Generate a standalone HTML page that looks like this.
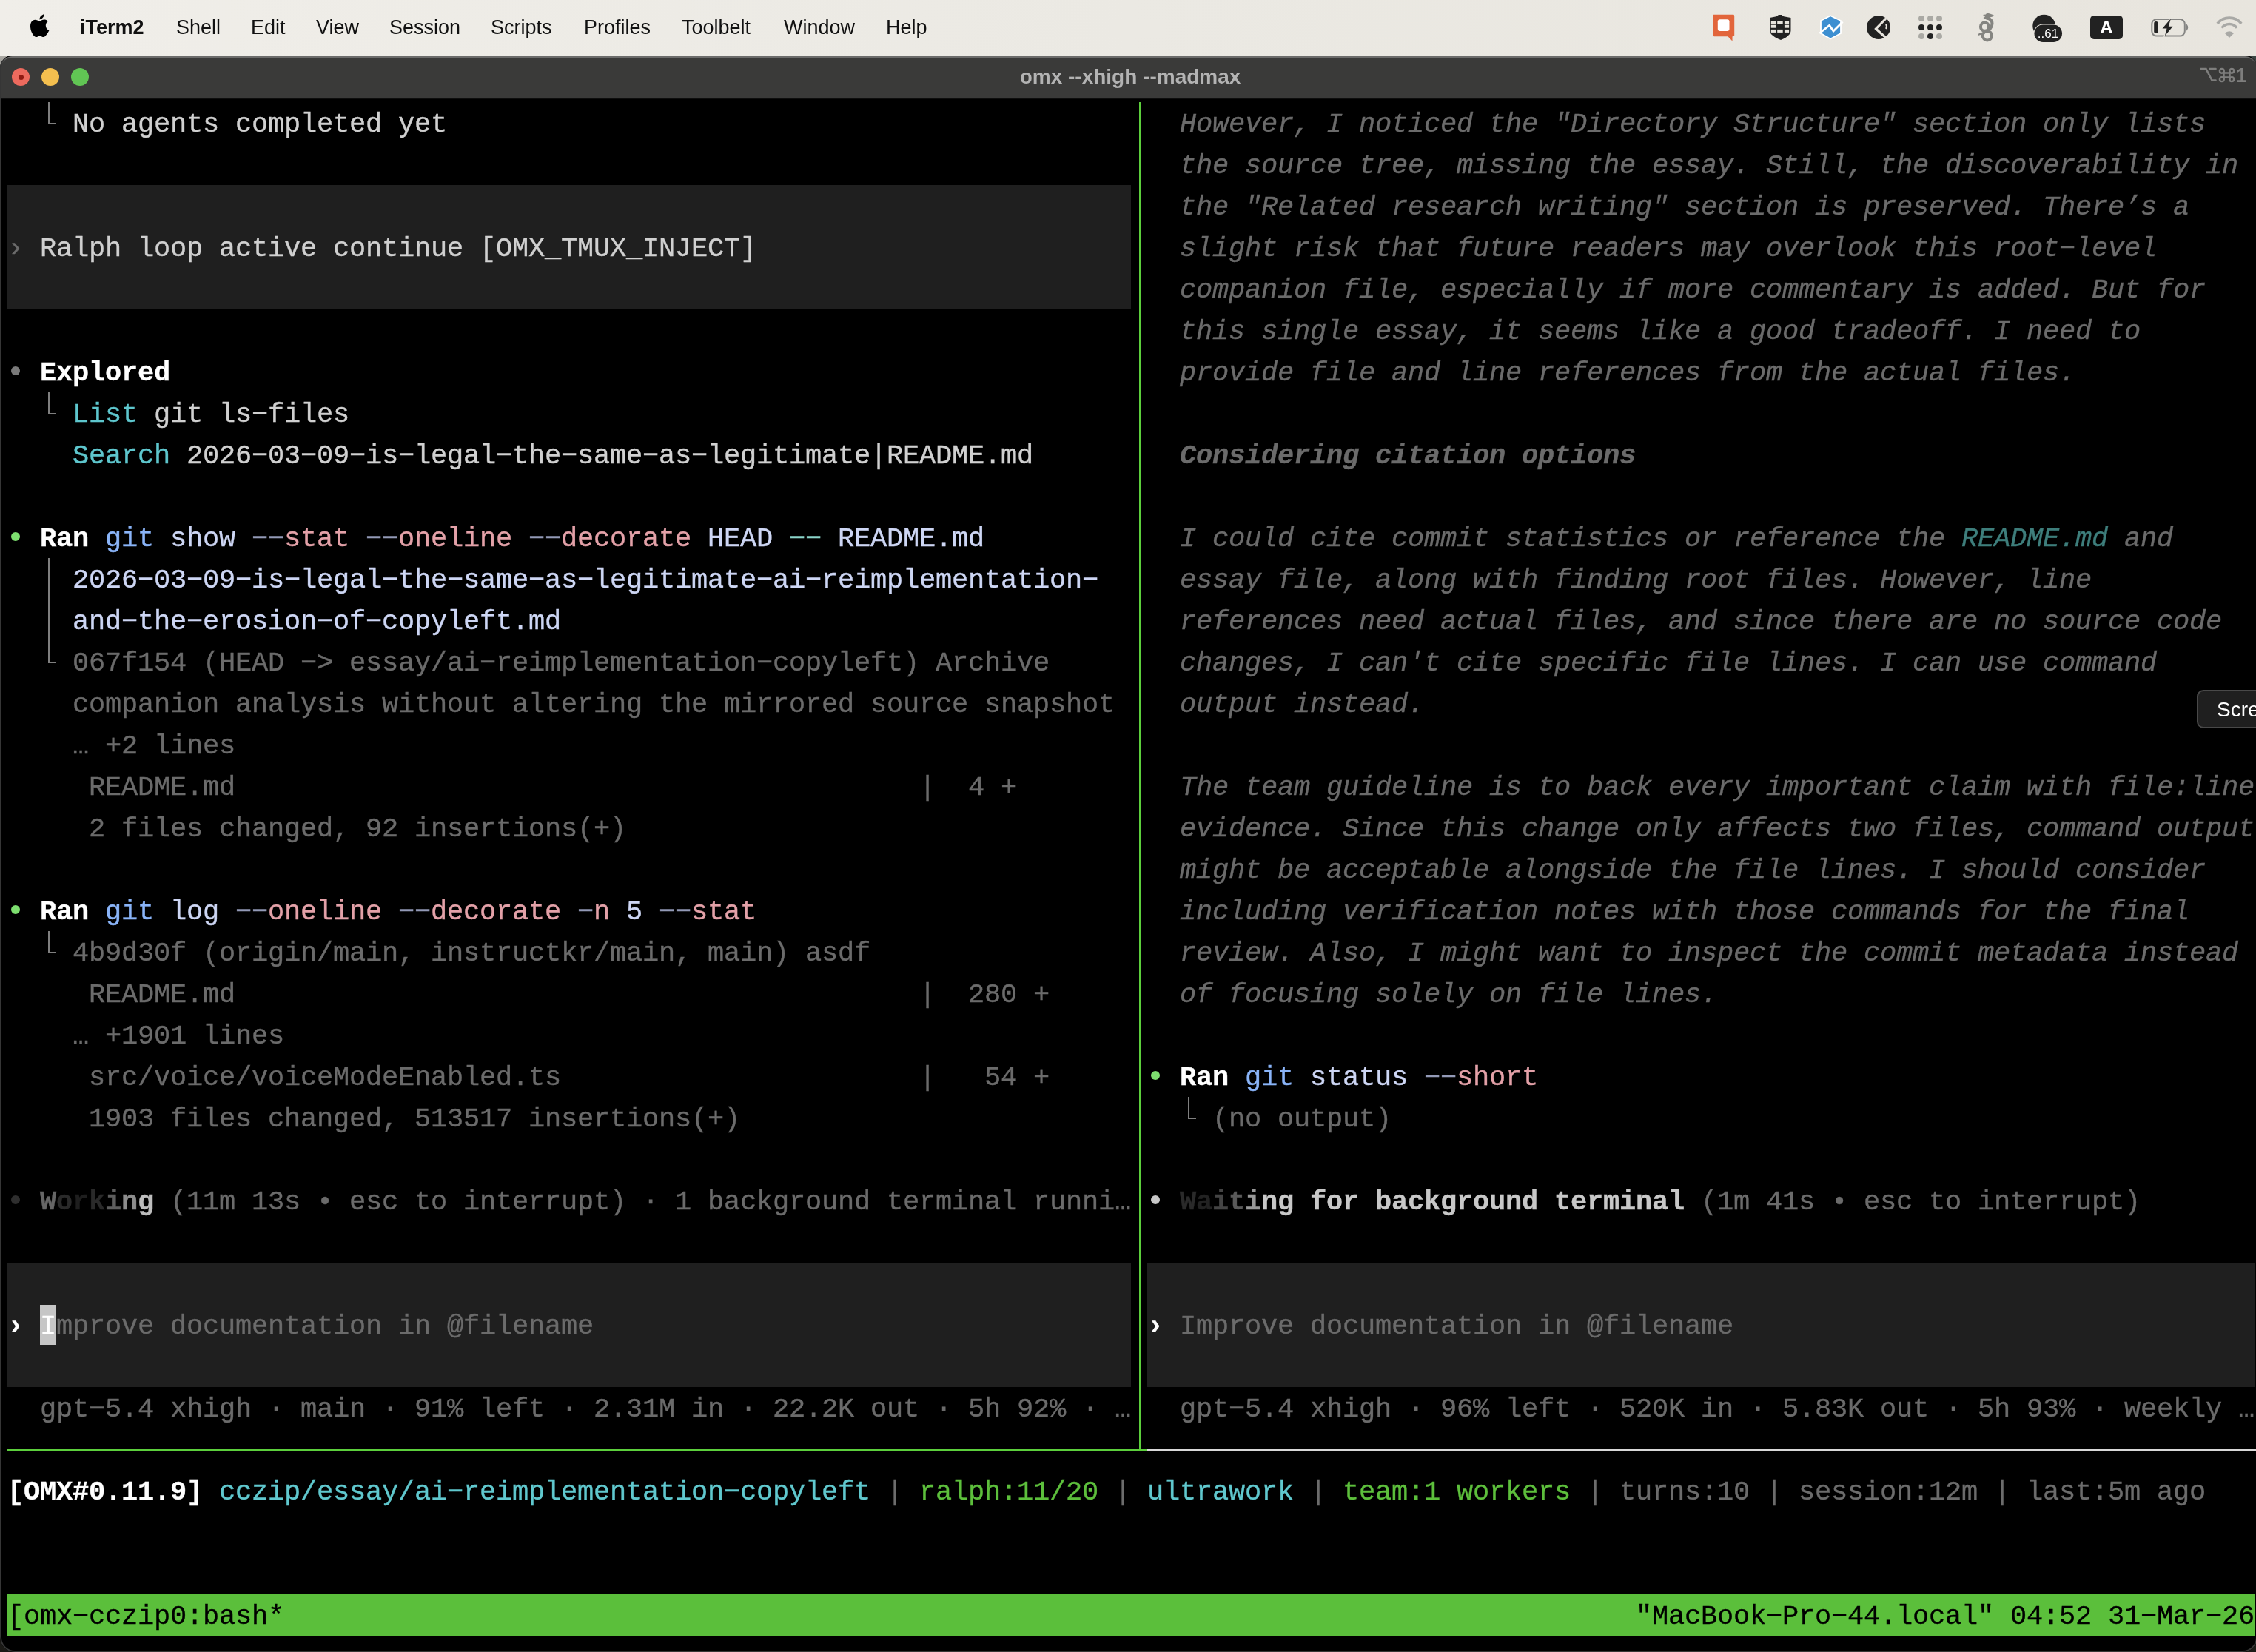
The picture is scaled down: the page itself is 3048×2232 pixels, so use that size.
<!DOCTYPE html>
<html><head><meta charset="utf-8"><style>
html,body{margin:0;padding:0;width:3048px;height:2232px;overflow:hidden;background:#1b1a16}
.t{position:absolute;white-space:pre;font-family:"Liberation Mono",monospace;font-size:37px;letter-spacing:-0.2036px;-webkit-text-stroke:0.35px currentColor;line-height:56px;height:56px}
#menubar{position:absolute;left:0;top:0;width:3048px;height:75px;background:linear-gradient(90deg,#f0eee9,#ebe9e3 50%,#e8e5de);will-change:transform}
.mi{position:absolute;top:0;height:75px;line-height:75px;font-family:"Liberation Sans",sans-serif;font-size:27px;color:#111}
#win{position:absolute;left:0;top:75px;width:3050px;height:2157px;background:#000;border-radius:17px 17px 20px 20px;overflow:hidden;will-change:transform}
#title{position:absolute;left:0;top:0;width:3050px;height:59px;background:#3a3a39;border-top:1.4px solid #000;border-bottom:2px solid #0e0e0e;box-sizing:border-box}
#hl{position:absolute;left:1px;top:0px;width:3048px;height:17px;border-top:2px solid #6c6c6b;border-radius:16px 16px 0 0;box-sizing:border-box}
#lb{position:absolute;left:0;top:0;width:3050px;height:2157px;box-sizing:border-box;border:2px solid #363636;border-top:1.4px solid #000;border-radius:16px 16px 20px 20px}
</style></head>
<body>

<div style="position:absolute;left:0;top:74px;width:24px;height:24px;background:linear-gradient(#b0aea8,#8a8884)"></div>
<div style="position:absolute;left:3024px;top:74px;width:24px;height:24px;background:#3c4644"></div>
<div id="menubar">
<svg style="position:absolute;left:41.4px;top:19.1px" width="26" height="32" viewBox="0 0 26 32"><path fill="#000" d="M12.5 9.3C10.5 9.3 8.5 7.8 6.5 7.8C2.5 7.8 0 11.5 0 16.5C0 22 3 28 5.5 30C6.5 31 8 31.2 9.5 30.7C11 30.2 11.5 29.8 12.7 29.8C14 29.8 14.5 30.2 16 30.7C17.5 31.2 19 31 20 30C22 28 24 25 25.4 22C22.5 20.8 20.8 18.5 20.8 15.5C20.8 13 22.2 11 24 9.8C22.5 8.2 20.5 7.6 18.5 7.6C16.5 7.6 14.5 9.3 12.5 9.3Z M12.4 7.4C12.4 4 15 1 18.7 0.3C18.8 3.5 16 7 12.4 7.4Z"/></svg>
<div class="mi" style="left:108px;font-weight:bold;">iTerm2</div>
<div class="mi" style="left:238px;">Shell</div>
<div class="mi" style="left:339px;">Edit</div>
<div class="mi" style="left:427px;">View</div>
<div class="mi" style="left:526px;">Session</div>
<div class="mi" style="left:663px;">Scripts</div>
<div class="mi" style="left:789px;">Profiles</div>
<div class="mi" style="left:921px;">Toolbelt</div>
<div class="mi" style="left:1059px;">Window</div>
<div class="mi" style="left:1197px;">Help</div>
<!-- orange speech -->
<svg style="position:absolute;left:2313px;top:19px" width="32" height="38" viewBox="0 0 32 38"><path fill="#e2653b" d="M3 0.8H28.5C29.6 0.8 30.2 1.4 30.2 2.5V28.5C30.2 29.6 29.6 30.2 28.5 30.2H27.5L27.5 36.5L21.5 30.2H3C1.9 30.2 1.2 29.6 1.2 28.5V2.5C1.2 1.4 1.9 0.8 3 0.8Z"/><rect x="7.8" y="7.2" width="15.7" height="15.9" rx="3" fill="#fff"/></svg>
<!-- shield -->
<svg style="position:absolute;left:2390px;top:19px" width="31" height="36" viewBox="0 0 31 36"><path fill="#222" d="M1 5L10 3.2L13 1H17L20 3.2L29.5 5V22.5C29.5 27 24 32 16 35C8 32 1 27 1 22.5Z"/><g fill="#e8e5de"><rect x="2.8" y="9" width="6.2" height="4"/><rect x="11.2" y="9" width="7.5" height="4"/><rect x="20.9" y="9" width="6.2" height="4"/><rect x="2.8" y="14.7" width="6.2" height="4"/><rect x="20.9" y="14.7" width="6.2" height="4"/><rect x="2.8" y="20.9" width="6.2" height="4"/><rect x="11.2" y="20.9" width="7.5" height="4"/><rect x="20.9" y="20.9" width="6.2" height="4"/></g></svg>
<!-- blue hex -->
<svg style="position:absolute;left:2457px;top:20px" width="34" height="34" viewBox="0 0 34 34"><path fill="#3d8fd1" stroke="#fff" stroke-width="1.8" d="M16 1.2L30 8V25L16 32.5L3 25V8Z"/><path fill="none" stroke="#fff" stroke-width="2.8" d="M1.2 25L14.7 14.2L20 22L32.6 9.5"/></svg>
<!-- pacman circle -->
<svg style="position:absolute;left:2521px;top:20px" width="34" height="34" viewBox="0 0 34 34"><circle cx="17" cy="17" r="16" fill="#222"/><path d="M27.5 4.5L13.5 19L27.5 31.5" fill="none" stroke="#e8e5de" stroke-width="3.2"/><path d="M27 12.5Q28.5 16 27 19" fill="none" stroke="#e8e5de" stroke-width="1.8"/></svg>
<!-- dots -->
<svg style="position:absolute;left:2590px;top:19px" width="36" height="36" viewBox="0 0 36 36"><g fill="#aaa9a4"><circle cx="6" cy="6" r="4"/><circle cx="18" cy="6" r="4"/><circle cx="30" cy="6" r="4"/><circle cx="6" cy="30" r="4"/><circle cx="30" cy="30" r="4"/></g><g fill="#222"><circle cx="6" cy="18" r="4"/><circle cx="18" cy="18" r="4"/><circle cx="30" cy="18" r="4"/><circle cx="18" cy="30" r="4"/></g></svg>
<!-- wireguard -->
<svg style="position:absolute;left:2670px;top:16px" width="26" height="42" viewBox="0 0 26 42"><g fill="none" stroke="#858581" stroke-width="4"><circle cx="11.5" cy="20.2" r="5.6"/><circle cx="14.9" cy="32.3" r="6.2"/><path d="M10 27.8C17 25.5 21.5 22 21.5 16C21.5 11.5 18.5 9.5 15.5 8.5"/></g><path fill="#858581" d="M13.5 10.5L9.5 8L12 6.8L9 4L12.8 3.6L14.5 1.6L18.5 2.6L23.9 4.6L22 6.6L17.5 7.8L16.5 11Z"/><path fill="#858581" d="M9 30.5C5.5 30.8 3.5 32 1.9 31.8C3 29 5.5 27.6 9 27.8Z"/></svg>
<!-- cloud ..61 -->
<svg style="position:absolute;left:2744px;top:19px" width="44" height="40" viewBox="0 0 44 40"><circle cx="17.6" cy="16" r="15.3" fill="#222"/><rect x="3.5" y="13.6" width="39" height="25.4" rx="12.7" fill="#e8e5de"/><rect x="4.5" y="14.5" width="37.5" height="23.5" rx="11.7" fill="#222"/><text x="23" y="32" text-anchor="middle" font-family="Liberation Sans" font-size="17" fill="#fff">..61</text></svg>
<!-- A box -->
<div style="position:absolute;left:2824px;top:21px;width:44px;height:32px;border-radius:5px;background:#222;color:#fff;font-family:'Liberation Sans',sans-serif;font-weight:bold;font-size:24px;line-height:32px;text-align:center">A</div>
<!-- battery -->
<svg style="position:absolute;left:2904px;top:23px" width="56" height="28" viewBox="0 0 56 28"><rect x="3.3" y="3" width="44.5" height="22.6" rx="6.5" fill="none" stroke="#858583" stroke-width="2"/><path d="M50 10.5Q53 14 50 17.5Z" fill="#858583" stroke="#858583" stroke-width="1.5"/><rect x="6.2" y="6" width="5.5" height="16" rx="2.7" fill="#222"/><path d="M29 0L16 17L22 17L18.5 29L33 12L27 12Z" fill="#e8e5de"/><path d="M29 2L17.5 15.6H23.5L20.9 25.6L31.6 12.7H25.8Z" fill="#222"/></svg>
<!-- wifi -->
<svg style="position:absolute;left:2993px;top:22px" width="38" height="30" viewBox="0 0 38 30"><g fill="none" stroke="#a9a9a6" stroke-width="3.6"><path d="M2.8 9.8A21 21 0 0 1 35.2 9.8"/><path d="M8.8 15.8A12.5 12.5 0 0 1 29.2 15.8"/></g><path d="M13 23A8 8 0 0 1 25 23L19 29Z" fill="#a9a9a6"/></svg>
<!-- title bar shortcut -->

</div>
<div id="win">
 <div id="title">
  <div id="hl"></div>
  <div style="position:absolute;left:16px;top:16px;width:24px;height:24px;border-radius:50%;background:#ec6a5e"><div style="position:absolute;left:8.5px;top:8.5px;width:7px;height:7px;border-radius:50%;background:#8f1a12"></div></div>
  <div style="position:absolute;left:56px;top:16px;width:24px;height:24px;border-radius:50%;background:#f4bf4f"></div>
  <div style="position:absolute;left:96px;top:16px;width:24px;height:24px;border-radius:50%;background:#61c554"></div>
  <div style="position:absolute;left:0;top:0;width:3048px;height:56px;line-height:56px;text-align:center;font-family:'Liberation Sans',sans-serif;font-weight:bold;font-size:28px;color:#b3b3b3;padding-left:6px;box-sizing:border-box">omx --xhigh --madmax</div>
  <svg style="position:absolute;left:2970px;top:14px" width="64" height="24" viewBox="0 0 64 24"><g fill="none" stroke="#7e7e7d" stroke-width="2.6" stroke-linecap="round"><path d="M3.5 3H10.5L18.5 18.5H23.5"/><path d="M15.5 3H23.5"/></g><g fill="none" stroke="#7e7e7d" stroke-width="2.4"><path d="M34.5 8.5H42.5M34.5 14.5H42.5M34.5 5.5V17.5M42.5 5.5V17.5"/><circle cx="31.8" cy="5.8" r="2.9"/><circle cx="45.2" cy="5.8" r="2.9"/><circle cx="31.8" cy="17.2" r="2.9"/><circle cx="45.2" cy="17.2" r="2.9"/></g><text x="51" y="20.5" font-family="Liberation Sans" font-weight="bold" font-size="27" fill="#7e7e7d">1</text></svg>
 </div>
 <div id="lb"></div>
</div>
<div style="position:absolute;left:2968px;top:932px;width:120px;height:52px;border-radius:9px;background:#1f1f1f;border:2px solid #494949;box-sizing:border-box;overflow:hidden"><div style="position:absolute;left:25px;top:1px;line-height:48px;font-family:'Liberation Sans',sans-serif;font-size:28px;color:#fff;white-space:pre">Screenshot</div></div>

<div id="term" style="position:absolute;left:0;top:0;width:3048px;height:2232px;will-change:transform">
<div style="position:absolute;left:10px;top:250px;width:1518px;height:168px;background:#1f1f1f"></div>
<div style="position:absolute;left:10px;top:1706px;width:1518px;height:168px;background:#1f1f1f"></div>
<div style="position:absolute;left:1550px;top:1706px;width:1496px;height:168px;background:#1f1f1f"></div>
<div style="position:absolute;left:10px;top:2154px;width:3036px;height:56px;background:#5bbf3b"></div>
<div style="position:absolute;left:54px;top:1763px;width:22px;height:54px;background:#c6c6c6"></div>
<div class="t" style="left:98px;top:140px;color:#d0d0d0">No agents completed yet</div>
<div class="t" style="left:10px;top:308px;color:#6b6b6b">›</div>
<div class="t" style="left:54px;top:308px;color:#d0d0d0">Ralph loop active continue [OMX_TMUX_INJECT]</div>
<div style="position:absolute;left:14.9px;top:494.5px;width:12.2px;height:12.2px;border-radius:50%;background:#7a7a7a"></div>
<div class="t" style="left:54px;top:476px;color:#ffffff;font-weight:bold">Explored</div>
<div class="t" style="left:98px;top:532px;color:#5ec6cd">List</div>
<div class="t" style="left:208px;top:532px;color:#d0d0d0">git ls−files</div>
<div class="t" style="left:98px;top:588px;color:#5ec6cd">Search</div>
<div class="t" style="left:252px;top:588px;color:#d0d0d0">2026−03−09−is−legal−the−same−as−legitimate|README.md</div>
<div style="position:absolute;left:14.9px;top:718.5px;width:12.2px;height:12.2px;border-radius:50%;background:#7ddf6f"></div>
<div class="t" style="left:54px;top:700px;color:#ffffff;font-weight:bold">Ran</div>
<div class="t" style="left:142px;top:700px;color:#8ab4f8">git</div>
<div class="t" style="left:230px;top:700px;color:#cdd6f4">show</div>
<div class="t" style="left:340px;top:700px;color:#939ab7">−−</div>
<div class="t" style="left:384px;top:700px;color:#e3a1a8">stat</div>
<div class="t" style="left:494px;top:700px;color:#939ab7">−−</div>
<div class="t" style="left:538px;top:700px;color:#e3a1a8">oneline</div>
<div class="t" style="left:714px;top:700px;color:#939ab7">−−</div>
<div class="t" style="left:758px;top:700px;color:#e3a1a8">decorate</div>
<div class="t" style="left:956px;top:700px;color:#cdd6f4">HEAD</div>
<div class="t" style="left:1066px;top:700px;color:#8bd5ca">−−</div>
<div class="t" style="left:1132px;top:700px;color:#cdd6f4">README.md</div>
<div class="t" style="left:98px;top:756px;color:#cdd6f4">2026−03−09−is−legal−the−same−as−legitimate−ai−reimplementation−</div>
<div class="t" style="left:98px;top:812px;color:#cdd6f4">and−the−erosion−of−copyleft.md</div>
<div class="t" style="left:98px;top:868px;color:#6b6b6b">067f154 (HEAD −&gt; essay/ai−reimplementation−copyleft) Archive</div>
<div class="t" style="left:98px;top:924px;color:#6b6b6b">companion analysis without altering the mirrored source snapshot</div>
<div class="t" style="left:98px;top:980px;color:#6b6b6b">… +2 lines</div>
<div class="t" style="left:120px;top:1036px;color:#6b6b6b">README.md</div>
<div class="t" style="left:1242px;top:1036px;color:#6b6b6b">|  4 +</div>
<div class="t" style="left:120px;top:1092px;color:#6b6b6b">2 files changed, 92 insertions(+)</div>
<div style="position:absolute;left:14.9px;top:1222.5px;width:12.2px;height:12.2px;border-radius:50%;background:#7ddf6f"></div>
<div class="t" style="left:54px;top:1204px;color:#ffffff;font-weight:bold">Ran</div>
<div class="t" style="left:142px;top:1204px;color:#8ab4f8">git</div>
<div class="t" style="left:230px;top:1204px;color:#cdd6f4">log</div>
<div class="t" style="left:318px;top:1204px;color:#939ab7">−−</div>
<div class="t" style="left:362px;top:1204px;color:#e3a1a8">oneline</div>
<div class="t" style="left:538px;top:1204px;color:#939ab7">−−</div>
<div class="t" style="left:582px;top:1204px;color:#e3a1a8">decorate</div>
<div class="t" style="left:780px;top:1204px;color:#939ab7">−</div>
<div class="t" style="left:802px;top:1204px;color:#e3a1a8">n</div>
<div class="t" style="left:846px;top:1204px;color:#cdd6f4">5</div>
<div class="t" style="left:890px;top:1204px;color:#939ab7">−−</div>
<div class="t" style="left:934px;top:1204px;color:#e3a1a8">stat</div>
<div class="t" style="left:98px;top:1260px;color:#6b6b6b">4b9d30f (origin/main, instructkr/main, main) asdf</div>
<div class="t" style="left:120px;top:1316px;color:#6b6b6b">README.md</div>
<div class="t" style="left:1242px;top:1316px;color:#6b6b6b">|  280 +</div>
<div class="t" style="left:98px;top:1372px;color:#6b6b6b">… +1901 lines</div>
<div class="t" style="left:120px;top:1428px;color:#6b6b6b">src/voice/voiceModeEnabled.ts</div>
<div class="t" style="left:1242px;top:1428px;color:#6b6b6b">|   54 +</div>
<div class="t" style="left:120px;top:1484px;color:#6b6b6b">1903 files changed, 513517 insertions(+)</div>
<div style="position:absolute;left:14.9px;top:1614.5px;width:12.2px;height:12.2px;border-radius:50%;background:#2e2e2e"></div>
<div class="t" style="left:54px;top:1596px;color:#666666;font-weight:bold">W</div>
<div class="t" style="left:76px;top:1596px;color:#2a2a2a;font-weight:bold">o</div>
<div class="t" style="left:98px;top:1596px;color:#1e1e1e;font-weight:bold">r</div>
<div class="t" style="left:120px;top:1596px;color:#2a2a2a;font-weight:bold">k</div>
<div class="t" style="left:142px;top:1596px;color:#5e5e5e;font-weight:bold">i</div>
<div class="t" style="left:164px;top:1596px;color:#8c8c8c;font-weight:bold">n</div>
<div class="t" style="left:186px;top:1596px;color:#bdbdbd;font-weight:bold">g</div>
<div class="t" style="left:230px;top:1596px;color:#6b6b6b">(11m 13s • esc to interrupt) · 1 background terminal runni…</div>
<div class="t" style="left:10px;top:1764px;color:#ffffff;font-weight:bold">›</div>
<div class="t" style="left:76px;top:1764px;color:#6b6b6b">mprove documentation in @filename</div>
<div class="t" style="left:54px;top:1876px;color:#6b6b6b">gpt−5.4 xhigh · main · 91% left · 2.31M in · 22.2K out · 5h 92% · …</div>
<div class="t" style="left:1594px;top:140px;color:#6b6b6b;font-style:italic">However, I noticed the &quot;Directory Structure&quot; section only lists</div>
<div class="t" style="left:1594px;top:196px;color:#6b6b6b;font-style:italic">the source tree, missing the essay. Still, the discoverability in</div>
<div class="t" style="left:1594px;top:252px;color:#6b6b6b;font-style:italic">the &quot;Related research writing&quot; section is preserved. There’s a</div>
<div class="t" style="left:1594px;top:308px;color:#6b6b6b;font-style:italic">slight risk that future readers may overlook this root−level</div>
<div class="t" style="left:1594px;top:364px;color:#6b6b6b;font-style:italic">companion file, especially if more commentary is added. But for</div>
<div class="t" style="left:1594px;top:420px;color:#6b6b6b;font-style:italic">this single essay, it seems like a good tradeoff. I need to</div>
<div class="t" style="left:1594px;top:476px;color:#6b6b6b;font-style:italic">provide file and line references from the actual files.</div>
<div class="t" style="left:1594px;top:756px;color:#6b6b6b;font-style:italic">essay file, along with finding root files. However, line</div>
<div class="t" style="left:1594px;top:812px;color:#6b6b6b;font-style:italic">references need actual files, and since there are no source code</div>
<div class="t" style="left:1594px;top:868px;color:#6b6b6b;font-style:italic">changes, I can&#x27;t cite specific file lines. I can use command</div>
<div class="t" style="left:1594px;top:924px;color:#6b6b6b;font-style:italic">output instead.</div>
<div class="t" style="left:1594px;top:1036px;color:#6b6b6b;font-style:italic">The team guideline is to back every important claim with file:line</div>
<div class="t" style="left:1594px;top:1092px;color:#6b6b6b;font-style:italic">evidence. Since this change only affects two files, command output</div>
<div class="t" style="left:1594px;top:1148px;color:#6b6b6b;font-style:italic">might be acceptable alongside the file lines. I should consider</div>
<div class="t" style="left:1594px;top:1204px;color:#6b6b6b;font-style:italic">including verification notes with those commands for the final</div>
<div class="t" style="left:1594px;top:1260px;color:#6b6b6b;font-style:italic">review. Also, I might want to inspect the commit metadata instead</div>
<div class="t" style="left:1594px;top:1316px;color:#6b6b6b;font-style:italic">of focusing solely on file lines.</div>
<div class="t" style="left:1594px;top:588px;color:#6b6b6b;font-weight:bold;font-style:italic">Considering citation options</div>
<div class="t" style="left:1594px;top:700px;color:#6b6b6b;font-style:italic">I could cite commit statistics or reference the </div>
<div class="t" style="left:2650px;top:700px;color:#3e7e7c;font-style:italic">README.md</div>
<div class="t" style="left:2870px;top:700px;color:#6b6b6b;font-style:italic">and</div>
<div style="position:absolute;left:1554.9px;top:1446.5px;width:12.2px;height:12.2px;border-radius:50%;background:#7ddf6f"></div>
<div class="t" style="left:1594px;top:1428px;color:#ffffff;font-weight:bold">Ran</div>
<div class="t" style="left:1682px;top:1428px;color:#8ab4f8">git</div>
<div class="t" style="left:1770px;top:1428px;color:#cdd6f4">status</div>
<div class="t" style="left:1924px;top:1428px;color:#939ab7">−−</div>
<div class="t" style="left:1968px;top:1428px;color:#e3a1a8">short</div>
<div class="t" style="left:1638px;top:1484px;color:#6b6b6b">(no output)</div>
<div style="position:absolute;left:1554.9px;top:1614.5px;width:12.2px;height:12.2px;border-radius:50%;background:#c8c8c8"></div>
<div class="t" style="left:1594px;top:1596px;color:#2a2a2a;font-weight:bold">W</div>
<div class="t" style="left:1616px;top:1596px;color:#222222;font-weight:bold">a</div>
<div class="t" style="left:1638px;top:1596px;color:#444444;font-weight:bold">i</div>
<div class="t" style="left:1660px;top:1596px;color:#5a5a5a;font-weight:bold">t</div>
<div class="t" style="left:1682px;top:1596px;color:#999999;font-weight:bold">i</div>
<div class="t" style="left:1704px;top:1596px;color:#c8c8c8;font-weight:bold">ng for background terminal</div>
<div class="t" style="left:2298px;top:1596px;color:#6b6b6b">(1m 41s • esc to interrupt)</div>
<div class="t" style="left:1550px;top:1764px;color:#ffffff;font-weight:bold">›</div>
<div class="t" style="left:1594px;top:1764px;color:#6b6b6b">Improve documentation in @filename</div>
<div class="t" style="left:1594px;top:1876px;color:#6b6b6b">gpt−5.4 xhigh · 96% left · 520K in · 5.83K out · 5h 93% · weekly …</div>
<div class="t" style="left:10px;top:1988px;color:#ffffff;font-weight:bold">[OMX#0.11.9]</div>
<div class="t" style="left:296px;top:1988px;color:#60c8ce">cczip/essay/ai−reimplementation−copyleft</div>
<div class="t" style="left:1176px;top:1988px;color:#6c6c6c"> | </div>
<div class="t" style="left:1242px;top:1988px;color:#5dbf3c">ralph:11/20</div>
<div class="t" style="left:1484px;top:1988px;color:#6c6c6c"> | </div>
<div class="t" style="left:1550px;top:1988px;color:#60c8ce">ultrawork</div>
<div class="t" style="left:1748px;top:1988px;color:#6c6c6c"> | </div>
<div class="t" style="left:1814px;top:1988px;color:#5dbf3c">team:1 workers</div>
<div class="t" style="left:2122px;top:1988px;color:#6c6c6c"> | turns:10 | session:12m | last:5m ago</div>
<div class="t" style="left:10px;top:2156px;color:#000000">[omx−cczip0:bash*</div>
<div class="t" style="left:2210px;top:2156px;color:#000000">&quot;MacBook−Pro−44.local&quot; 04:52 31−Mar−26</div>
<div class="t" style="left:54px;top:1764px;color:#ffffff">I</div>
<div style="position:absolute;left:65px;top:138px;width:1.6px;height:29px;background:#7f7f7f"></div>
<div style="position:absolute;left:65px;top:166px;width:11px;height:1.6px;background:#7f7f7f"></div>
<div style="position:absolute;left:65px;top:530px;width:1.6px;height:29px;background:#7f7f7f"></div>
<div style="position:absolute;left:65px;top:558px;width:11px;height:1.6px;background:#7f7f7f"></div>
<div style="position:absolute;left:65px;top:754px;width:1.6px;height:56px;background:#7f7f7f"></div>
<div style="position:absolute;left:65px;top:810px;width:1.6px;height:56px;background:#7f7f7f"></div>
<div style="position:absolute;left:65px;top:866px;width:1.6px;height:29px;background:#7f7f7f"></div>
<div style="position:absolute;left:65px;top:894px;width:11px;height:1.6px;background:#7f7f7f"></div>
<div style="position:absolute;left:65px;top:1258px;width:1.6px;height:29px;background:#7f7f7f"></div>
<div style="position:absolute;left:65px;top:1286px;width:11px;height:1.6px;background:#7f7f7f"></div>
<div style="position:absolute;left:1605px;top:1482px;width:1.6px;height:29px;background:#7f7f7f"></div>
<div style="position:absolute;left:1605px;top:1510px;width:11px;height:1.6px;background:#7f7f7f"></div>
<div style="position:absolute;left:1539px;top:138px;width:2px;height:1822px;background:#5ccf3c"></div>
<div style="position:absolute;left:10px;top:1958px;width:1540px;height:2px;background:#5ccf3c"></div>
<div style="position:absolute;left:1550px;top:1958px;width:1498px;height:2px;background:#d8d8d8"></div>
</div>
</body></html>
